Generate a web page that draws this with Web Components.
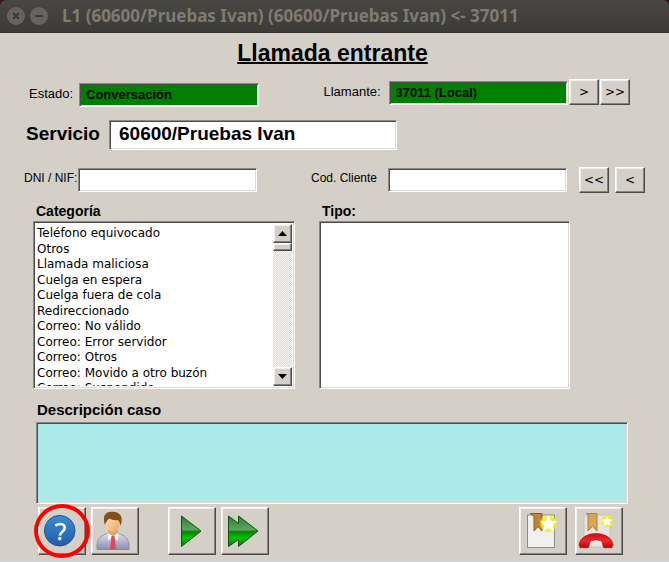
<!DOCTYPE html>
<html lang="es">
<head>
<meta charset="utf-8">
<meta name="viewport" content="width=device-width, initial-scale=1">
<title>L1 (60600/Pruebas Ivan)</title>
<style>
  body {
    margin: 0;
    background: #d4d0c8;
    color: #000;
    font-family: "Liberation Sans", Arial, sans-serif;
  }
</style>
</head>
<body>
<call-window caption="L1 (60600/Pruebas Ivan) (60600/Pruebas Ivan) &lt;- 37011">
  <call-form></call-form>
</call-window>

<script>
  const GREEN = `
    <defs><linearGradient id="g" x1="0" y1="0" x2="0" y2="1">
      <stop offset="0" stop-color="#2b7d2b"/><stop offset=".44" stop-color="#5fa35f"/><stop offset=".52" stop-color="#0a820a"/><stop offset=".72" stop-color="#00c800"/><stop offset="1" stop-color="#087008"/>
    </linearGradient></defs>`

  const GLOW = `
    <radialGradient id="y"><stop offset=".7" stop-color="#f4ee20"/><stop offset="1" stop-color="#f4ee20" stop-opacity=".2"/></radialGradient>`

  const ICONS = {
    help: `
      <defs><linearGradient id="g" x1="0" y1="0" x2="0" y2="1">
        <stop offset="0" stop-color="#3d8bd0"/><stop offset="1" stop-color="#1e5fa8"/>
      </linearGradient></defs>
      <circle cx="21.7" cy="23.7" r="15.3" fill="url(#g)" stroke="#1c5796"/>
      <path d="M17.3 18.6q4-2.4 7.2-1.2c3 1.3 2.8 4.6.6 6.6-2 1.7-3.2 2.3-3.2 4.6" fill="none" stroke="#fff" stroke-width="2.6"/>
      <circle cx="21.8" cy="31.6" r="1.8" fill="#fff"/>`,
    user: `
      <defs>
        <linearGradient id="s" x1="0" y1="0" x2="0" y2="1"><stop offset="0" stop-color="#dcdcec"/><stop offset="1" stop-color="#8d8db0"/></linearGradient>
        <linearGradient id="f" x1="0" y1="0" x2="1" y2="1"><stop offset="0" stop-color="#ffe2b8"/><stop offset="1" stop-color="#e8a860"/></linearGradient>
      </defs>
      <path d="M6 42.5C5.5 33 7.5 29.5 16 26.5h12c8 3 10.5 6.5 10 16z" fill="url(#s)" stroke="#7a7a98" stroke-width=".7"/>
      <path d="M17 22h10v4l-5 4-5-4z" fill="#e2a566"/>
      <path d="M16.5 25.5l5.5 4-4.5 4zM27.5 25.5l-5.5 4 4.5 4z" fill="#fff"/>
      <path d="M20.5 29h3l1.5 13.5h-6z" fill="#e04858"/>
      <ellipse cx="21.8" cy="16.5" rx="7" ry="8.3" fill="url(#f)"/>
      <path d="M14 18C11 9 14.5 4.5 21 4.8c8-.3 12 5 8.5 14.2-.3-2.5-.8-4-2.5-6-3 .6-6.500 0-8.500-1.500-2.500 1.500-3.500 3.500-4.500 6.500z" fill="#80511c"/>`,
    play: `
      ${GREEN}
      <path d="M13.5 9v30.5l19.500-15.500z" fill="url(#g)" stroke="#145214"/>`,
    forward: `
      ${GREEN}
      <path d="M7.5 9v30.5l10-7v7l19.500-15.500-19.500-15v7.500z" fill="url(#g)" stroke="#145214"/>`,
    note: `
      <defs>${GLOW}</defs>
      <path d="M8.5 8h27v32.5h-27z" fill="#f0f0ee" stroke="#8c8c88"/>
      <path d="M11 6.5h12v17.500l-4-4.500-4 4.500v-15z" fill="#c08438" stroke="#8f5a18"/>
      <circle cx="29.5" cy="16.7" r="9" fill="url(#y)"/>
      <path d="M29.5 10l2 4.400 4.800.5-3.500 3.300 1 4.700-4.300-2.400-4.300 2.400 1-4.700-3.500-3.300 4.800-.5z" fill="#fff" stroke="#fff" stroke-width="1.4"/>`,
    hangup: `
      <defs>
        ${GLOW}
        <linearGradient id="r" x1="0" y1="0" x2="0" y2="1"><stop offset="0" stop-color="#c80d14"/><stop offset=".5" stop-color="#ee2930"/><stop offset="1" stop-color="#c2000a"/></linearGradient>
      </defs>
      <path d="M9 8h26v32h-26z" fill="#e6e5e2" stroke="#c4c2bc"/>
      <path d="M11.5 6.5h10.5v17.5l-4.500-4.500-4.500 4.500v-16z" fill="#d8a558" stroke="#b58238"/>
      <circle cx="32" cy="14.3" r="6.500" fill="url(#y)"/>
      <path d="M32 10l1.300 2.800 3.100.3-2.300 2.100.7 3-2.800-1.600-2.800 1.600.7-3-2.300-2.100 3.100-.3z" fill="#fff" stroke="#fff"/>
      <path d="M4 37.5c1-6.500 8-11 17-11s16 4.500 17 11l-1 3.200h-8.500l-1.500-6.200c-3-2-9-2-12 0l-1.500 6.200h-8.500z" fill="url(#r)" stroke="#b0040c" stroke-width=".6"/>`
  }

  // shared 3D edges of the toolkit
  const BEVEL = `
    .sunken {
      box-sizing: border-box;
      border: 1px solid;
      border-color: #8c8984 #fff #fff #8c8984;
      box-shadow: inset 1px 1px #4c4c4c, inset -1px -1px #dedad3;
      border-radius: 0;
      outline: none;
      margin: 0;
    }
    .raised {
      box-sizing: border-box;
      border: 1px solid;
      border-color: #fff #4c4c4c #4c4c4c #fff;
      box-shadow: inset -1px -1px #86837d, inset 1px 1px #f2f0ec;
      border-radius: 0;
      margin: 0;
      padding: 0;
      background: #d4d0c8;
      color: #000;
    }
  `

  class CallWindow extends HTMLElement {
    constructor() {
      super()
      this.attachShadow({ mode: 'open' })
    }

    connectedCallback() {
      this.shadowRoot.innerHTML = `
        <style>
          :host {
            display: flex;
            flex-direction: column;
            box-sizing: border-box;
            min-height: 100vh;
            border-bottom: 1px solid #fff;
          }
          .bar { background: #3a0c1c; }
          header {
            display: flex;
            align-items: center;
            gap: 5px;
            box-sizing: border-box;
            height: 33px;
            padding: 0 7px;
            background: linear-gradient(#484743, #3c3b37);
            border-bottom: 1px solid #33322f;
            border-radius: 6px 6px 0 0;
          }
          h1 {
            margin: 0 0 0 9px;
            font: bold 17px/20px "Noto Sans", "Open Sans", sans-serif;
            color: #7f7b74;
            white-space: nowrap;
          }
          button {
            width: 18px;
            height: 18px;
            padding: 0;
            border: 0;
            border-radius: 50%;
            background: #656460;
          }
          svg { display: block; }
          path { fill: none; stroke: #3b3a36; stroke-width: 2; }
        </style>
        <div class="bar">
          <header>
            <button type="button" aria-label="Cerrar"><svg width="18" height="18"><path d="M6 6l6 6M12 6l-6 6"/></svg></button>
            <button type="button" aria-label="Minimizar"><svg width="18" height="18"><path d="M5 9h8"/></svg></button>
            <h1></h1>
          </header>
        </div>
        <slot></slot>
      `
      this.shadowRoot.querySelector('h1').textContent = this.getAttribute('caption')
    }
  }

  class TextField extends HTMLElement {
    constructor() {
      super()
      this.attachShadow({ mode: 'open' })
    }

    connectedCallback() {
      const label = this.getAttribute('label')
      const value = this.getAttribute('value') ?? ''
      this.shadowRoot.innerHTML = `
        <style>
          ${BEVEL}
          :host { display: flex; align-items: center; min-width: 0; }
          label {
            flex: none;
            width: var(--label-width);
            padding-bottom: 4px;
            white-space: nowrap;
          }
          input {
            flex: 1;
            min-width: 0;
            height: 24px;
            padding: 0 6px 2px;
            background: #fff;
            color: #000;
            font: bold 13px "Liberation Sans", Arial, sans-serif;
          }
          :host(.active) input { background: #008000; }
          :host(.big) { font-size: 19px; font-weight: bold; }
          :host(.big) label { padding-bottom: 2px; }
          :host(.big) input { height: 30px; padding: 0 9px 2px; font-size: 19px; }
        </style>
        <label for="box">${label}</label>
        <input id="box" class="sunken" type="text" value="${value}">
      `
    }
  }

  class PushButton extends HTMLElement {
    constructor() {
      super()
      this.attachShadow({ mode: 'open' })
    }

    connectedCallback() {
      this.shadowRoot.innerHTML = `
        <style>
          ${BEVEL}
          :host { display: block; flex: none; }
          button {
            display: block;
            width: 30px;
            height: 26px;
            padding-top: 3px;
            font: 12px "DejaVu Sans", sans-serif;
          }
        </style>
        <button type="button" class="raised"><slot></slot></button>
      `
    }
  }

  class IconButton extends HTMLElement {
    constructor() {
      super()
      this.attachShadow({ mode: 'open' })
    }

    connectedCallback() {
      this.shadowRoot.innerHTML = `
        <style>
          ${BEVEL}
          :host { display: block; flex: none; position: relative; }
          button { display: block; width: 48px; height: 48px; }
          svg { display: block; }
          .ring {
            display: none;
            position: absolute;
            inset: -3px -4px;
            box-sizing: border-box;
            border: 4px solid #f00;
            border-radius: 50%;
            pointer-events: none;
          }
          :host([marked]) .ring { display: block; }
        </style>
        <button type="button" class="raised" aria-label="${this.getAttribute('label')}">
          <svg width="46" height="46" viewBox="1 1 46 46">${ICONS[this.getAttribute('icon')]}</svg>
        </button>
        <span class="ring"></span>
      `
    }
  }

  class ListBox extends HTMLElement {
    constructor() {
      super()
      this.attachShadow({ mode: 'open' })
    }

    connectedCallback() {
      const items = (this.getAttribute('items') ?? '').split('|').filter(Boolean)
      this.shadowRoot.innerHTML = `
        <style>
          ${BEVEL}
          :host { display: flex; flex-direction: column; min-width: 0; }
          label { padding: 0 3px; font: bold 14px/16px "Liberation Sans", Arial, sans-serif; }
          .frame {
            display: flex;
            height: 168px;
            margin-top: 2px;
            padding: 2px;
            background: #fff;
          }
          select {
            flex: 1;
            min-width: 0;
            height: 100%;
            margin: 0;
            padding: 2px 0 0;
            border: 0;
            border-radius: 0;
            outline: none;
            background: #fff;
            color: #000;
            overflow: hidden;
            font: 12px "DejaVu Sans", sans-serif;
          }
          option { box-sizing: border-box; height: 15px; min-height: 0; padding: 0 1px; line-height: 15px; }
          option:nth-child(odd) { height: 16px; }
          .scroll {
            display: flex;
            flex-direction: column;
            width: 19px;
            background: repeating-conic-gradient(#f6f5f3 0 25%, #dedbd5 0 50%) 0 0 / 2px 2px;
          }
          .scroll button { flex: none; height: 19px; }
          .scroll .thumb { height: 8px; }
          .scroll svg { display: block; margin: auto; }
          .space { flex: 1; }
        </style>
        <label for="list">${this.getAttribute('label')}</label>
        <div class="frame sunken">
          <select id="list" size="10">${items.map(i => `<option>${i}</option>`).join('')}</select>
          ${items.length ? `
          <div class="scroll">
            <button type="button" class="raised up" aria-label="Subir"><svg width="9" height="5"><path d="M0 5L4.5 0L9 5z"/></svg></button>
            <div class="raised thumb"></div>
            <div class="space"></div>
            <button type="button" class="raised down" aria-label="Bajar"><svg width="9" height="5"><path d="M0 0L4.5 5L9 0z"/></svg></button>
          </div>` : ''}
        </div>
      `
      const select = this.shadowRoot.querySelector('select')
      this.shadowRoot.querySelector('.up')?.addEventListener('click', () => { select.scrollTop -= 31 })
      this.shadowRoot.querySelector('.down')?.addEventListener('click', () => { select.scrollTop += 31 })
    }
  }

  class CallForm extends HTMLElement {
    constructor() {
      super()
      this.attachShadow({ mode: 'open' })
    }

    get styles() {
      return `
        ${BEVEL}
        :host { display: flex; flex-direction: column; }
        h2 {
          margin: 7px 0 12px;
          padding-right: 4px;
          font-size: 23px;
          line-height: 27px;
          text-align: center;
          text-decoration: underline;
          text-decoration-thickness: 2px;
        }
        .row { display: flex; }
        .status { align-items: flex-start; padding: 0 39px 0 29px; font-size: 13px; }
        .state { --label-width: 50px; flex: 1 1 50px; margin: 4px 65px 0 0; }
        .caller { --label-width: 65px; display: flex; flex: 1 1 127px; min-width: 0; align-items: flex-end; }
        .caller text-field { flex: 1; margin-right: 1px; }
        .caller push-button + push-button { margin-left: 1px; }
        .service { --label-width: 83px; margin-top: 13px; padding: 0 26px; }
        .service text-field { flex: 0 1 371px; }
        .client { align-items: center; margin-top: 17px; padding: 0 24px; font-size: 12px; }
        .dni { --label-width: 54px; flex: 1 1 54px; margin-right: 54px; }
        .code { --label-width: 77px; flex: 1 1 77px; margin-right: 6px; }
        .client push-button { margin-left: 6px; }
        .lists {
          display: grid;
          grid-template-columns: 262fr 251fr;
          gap: 24px;
          margin-top: 10px;
          padding: 0 99px 0 33px;
        }
        .notes { display: flex; flex-direction: column; margin-top: 12px; padding: 0 41px 0 36px; }
        .notes label {
          margin-bottom: 3px;
          padding-left: 1px;
          font-size: 15px;
          line-height: 18px;
          font-weight: bold;
        }
        textarea {
          height: 82px;
          padding: 4px;
          background: #abeae8;
          resize: none;
          font: 13px "Liberation Sans", Arial, sans-serif;
        }
        .tools { gap: 5px; margin-top: 3px; padding: 0 46px 6px 38px; }
        .tools .play { margin-left: 24px; }
        .tools .note { margin: 0 3px 0 auto; }
      `
    }

    connectedCallback() {
      const categories = [
        'Teléfono equivocado', 'Otros', 'Llamada maliciosa', 'Cuelga en espera', 'Cuelga fuera de cola',
        'Redireccionado', 'Correo: No válido', 'Correo: Error servidor', 'Correo: Otros',
        'Correo: Movido a otro buzón', 'Correo: Suspendido'
      ]
      this.shadowRoot.innerHTML = `
        <style>
          ${this.styles}
        </style>
        <h2>Llamada entrante</h2>
        <div class="row status">
          <text-field class="state active" label="Estado:" value="Conversación"></text-field>
          <div class="caller">
            <text-field class="active" label="Llamante:" value="37011 (Local)"></text-field>
            <push-button>&gt;</push-button>
            <push-button>&gt;&gt;</push-button>
          </div>
        </div>
        <div class="row service">
          <text-field class="big" label="Servicio" value="60600/Pruebas Ivan"></text-field>
        </div>
        <div class="row client">
          <text-field class="dni" label="DNI / NIF:"></text-field>
          <text-field class="code" label="Cod. Cliente"></text-field>
          <push-button>&lt;&lt;</push-button>
          <push-button>&lt;</push-button>
        </div>
        <div class="lists">
          <list-box label="Categoría" items="${categories.join('|')}"></list-box>
          <list-box label="Tipo:"></list-box>
        </div>
        <div class="notes">
          <label for="notes">Descripción caso</label>
          <textarea id="notes" class="sunken"></textarea>
        </div>
        <div class="row tools">
          <icon-button icon="help" label="Ayuda" marked></icon-button>
          <icon-button icon="user" label="Agente"></icon-button>
          <icon-button class="play" icon="play" label="Siguiente"></icon-button>
          <icon-button icon="forward" label="Avanzar"></icon-button>
          <icon-button class="note" icon="note" label="Guardar nota"></icon-button>
          <icon-button icon="hangup" label="Guardar y colgar"></icon-button>
        </div>
      `
    }
  }

  customElements.define('text-field', TextField)
  customElements.define('push-button', PushButton)
  customElements.define('icon-button', IconButton)
  customElements.define('list-box', ListBox)
  customElements.define('call-form', CallForm)
  customElements.define('call-window', CallWindow)
</script>
</body>
</html>
